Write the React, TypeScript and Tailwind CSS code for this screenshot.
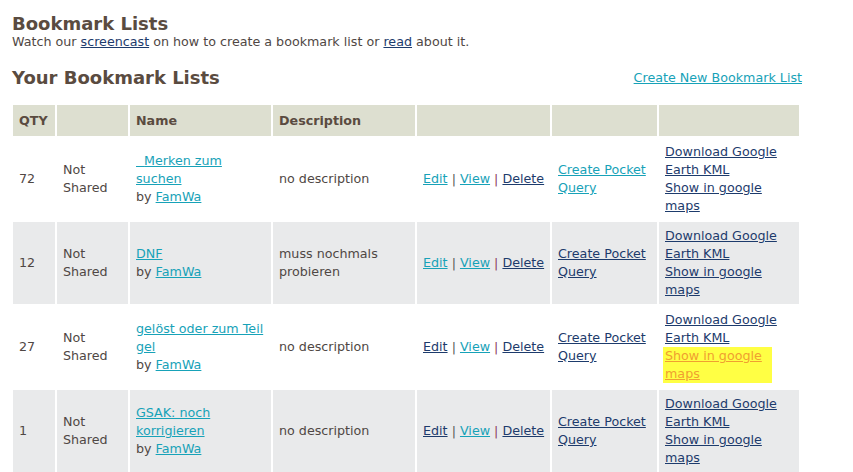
import React from 'react';

const cyan = 'text-[#17a2b8] underline';
const dark = 'text-[#1d3b6c] underline';

type Row = {
  qty: string;
  name: React.ReactNode;
  desc: React.ReactNode;
  editVisited: boolean;
  deleteVisited: boolean;
  pocketVisited: boolean;
  highlight?: boolean;
  gray: boolean;
};

const rows: Row[] = [
  {
    qty: '72',
    name: <>{'\u00a0\u00a0'}Merken zum<br />suchen</>,
    desc: 'no description',
    editVisited: false,
    deleteVisited: true,
    pocketVisited: false,
    gray: false,
  },
  {
    qty: '12',
    name: 'DNF',
    desc: (
      <>
        muss nochmals
        <br />
        probieren
      </>
    ),
    editVisited: false,
    deleteVisited: true,
    pocketVisited: true,
    gray: true,
  },
  {
    qty: '27',
    name: <>gelöst oder zum Teil<br />gel</>,
    desc: 'no description',
    editVisited: true,
    deleteVisited: true,
    pocketVisited: true,
    highlight: true,
    gray: false,
  },
  {
    qty: '1',
    name: <>GSAK: noch<br />korrigieren</>,
    desc: 'no description',
    editVisited: true,
    deleteVisited: true,
    pocketVisited: true,
    gray: true,
  },
];

export default function App() {
  return (
    <div
      className="min-h-screen bg-white text-[12.7px] leading-[18px] text-[#4f4744]"
      style={{ fontFamily: '"DejaVu Sans", Verdana, sans-serif' }}
    >
      <div className="pl-[12px] pt-[13px]">
        {/* Header */}
        <h1 className="text-[18px] leading-[21px] font-bold text-[#5a4b40]">Bookmark Lists</h1>
        <p className="leading-[16px]">
          Watch our <a className={dark}>screencast</a> on how to create a bookmark list or{' '}
          <a className={dark}>read</a> about it.
        </p>

        <div className="flex items-center justify-between w-[790px] mt-[17px]">
          <h2 className="text-[18px] leading-[22px] font-bold text-[#5a4b40]">Your Bookmark Lists</h2>
          <a className={cyan}>Create New Bookmark List</a>
        </div>

        {/* Bookmark table */}
        <table className="table-fixed border-separate border-spacing-[2px] mt-[14px] -ml-[1px] w-[790px]">
          <colgroup>
            <col className="w-[42px]" />
            <col className="w-[71px]" />
            <col className="w-[141px]" />
            <col className="w-[142px]" />
            <col className="w-[133px]" />
            <col className="w-[105px]" />
            <col className="w-[140px]" />
          </colgroup>
          <thead>
            <tr className="bg-[#dddfd0] text-[#5a4b40] font-bold text-left h-[31px]">
              <th className="px-[6px]">QTY</th>
              <th className="px-[6px]"></th>
              <th className="px-[6px]">Name</th>
              <th className="px-[6px]">Description</th>
              <th className="px-[6px]"></th>
              <th className="px-[6px]"></th>
              <th className="px-[6px]"></th>
            </tr>
          </thead>
          <tbody>
            {rows.map((r) => (
              <tr key={r.qty} className={`${r.gray ? 'bg-[#e9eaeb]' : 'bg-white'} align-middle h-[82px]`}>
                <td className="px-[6px]">{r.qty}</td>
                <td className="px-[6px]">
                  Not
                  <br />
                  Shared
                </td>
                <td className="px-[6px]">
                  <a className={cyan}>{r.name}</a>
                  <br />
                  by <a className={cyan}>FamWa</a>
                </td>
                <td className="px-[6px]">{r.desc}</td>
                <td className="px-[6px] whitespace-nowrap">
                  <a className={r.editVisited ? dark : cyan}>Edit</a> <span className="text-[#555]">|</span>{' '}
                  <a className={cyan}>View</a> <span className="text-[#8a3a5e]">|</span>{' '}
                  <a className={r.deleteVisited ? dark : cyan}>Delete</a>
                </td>
                <td className="px-[6px]">
                  <a className={r.pocketVisited ? dark : cyan}>
                    Create Pocket
                    <br />
                    Query
                  </a>
                </td>
                <td className="px-[6px]">
                  <a className={dark}>
                    Download Google
                    <br />
                    Earth KML
                  </a>
                  <br />
                  {r.highlight ? (
                    <span className="bg-[#ffff44] inline-block pr-[10px] -ml-[2px] pl-[2px]">
                      <a className="text-[#f0a030] underline">
                        Show in google
                        <br />
                        maps
                      </a>
                    </span>
                  ) : (
                    <a className={dark}>
                      Show in google
                      <br />
                      maps
                    </a>
                  )}
                </td>
              </tr>
            ))}
          </tbody>
        </table>
      </div>
    </div>
  );
}
